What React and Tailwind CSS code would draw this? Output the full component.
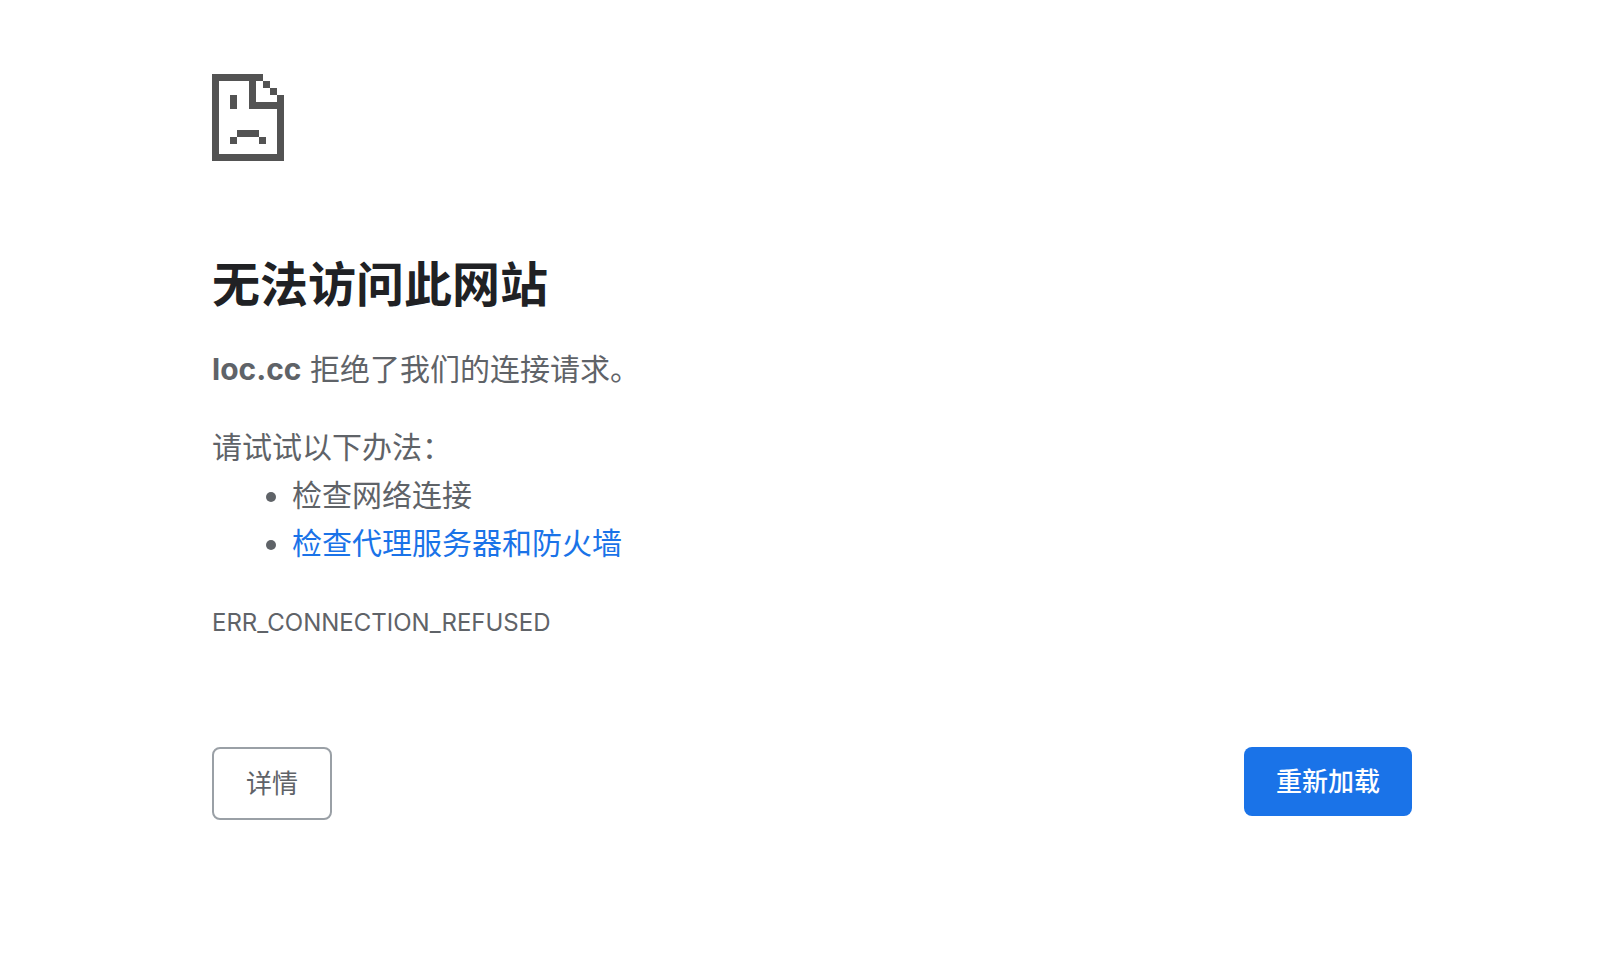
import React from 'react';

function SadPageIcon() {
  return (
    <svg
      className="block h-[87px] w-[72px]"
      viewBox="0 0 72 87"
      fill="#535353"
      shapeRendering="crispEdges"
      aria-hidden="true"
    >
      <path d="M0 0h51v7H0z M0 0h7v87H0z M0 80h72v7H0z M65 21h7v66h-7z" />
      <path d="M37 7h7v28h-7z M37 28h35v7H37z M51 7h7v7h-7z M58 14h7v7h-7z" />
      <path d="M18 21h7v14h-7z M25 56h22v7H25z M18 63h7v7h-7z M47 63h7v7h-7z" />
    </svg>
  );
}

function App() {
  return (
    <div className="min-h-screen bg-white pl-[10px] pt-[74px] font-['Inter','Noto_Sans_CJK_SC',sans-serif] text-[30px] leading-[48px] text-[#5f6368]">
      <main lang="zh-CN" className="mx-auto max-w-[1200px]">
        <SadPageIcon />
        <h1 className="mt-[92px] text-5xl leading-[64px] font-bold text-[#202124]">
          无法访问此网站
        </h1>
        <p className="mt-7">
          <strong className="font-bold">loc.cc</strong> 拒绝了我们的连接请求。
        </p>
        <div className="mt-[30px]">
          <p>请试试以下办法：</p>
          <ul className="list-disc pl-20">
            <li>检查网络连接</li>
            <li>
              <a href="#proxy" className="text-[#1a73e8]">
                检查代理服务器和防火墙
              </a>
            </li>
          </ul>
        </div>
        <p className="mt-8 text-2xl leading-[48px]">ERR_CONNECTION_REFUSED</p>
        <div className="mt-[100px] flex items-start justify-between text-[26px] leading-[37px]">
          <button
            type="button"
            className="rounded-lg border-2 border-[#9aa0a6] px-8 py-4"
          >
            详情
          </button>
          <button
            type="button"
            className="rounded-lg bg-[#1a73e8] px-8 py-4 font-medium text-white"
          >
            重新加载
          </button>
        </div>
      </main>
    </div>
  );
}

export default App;
